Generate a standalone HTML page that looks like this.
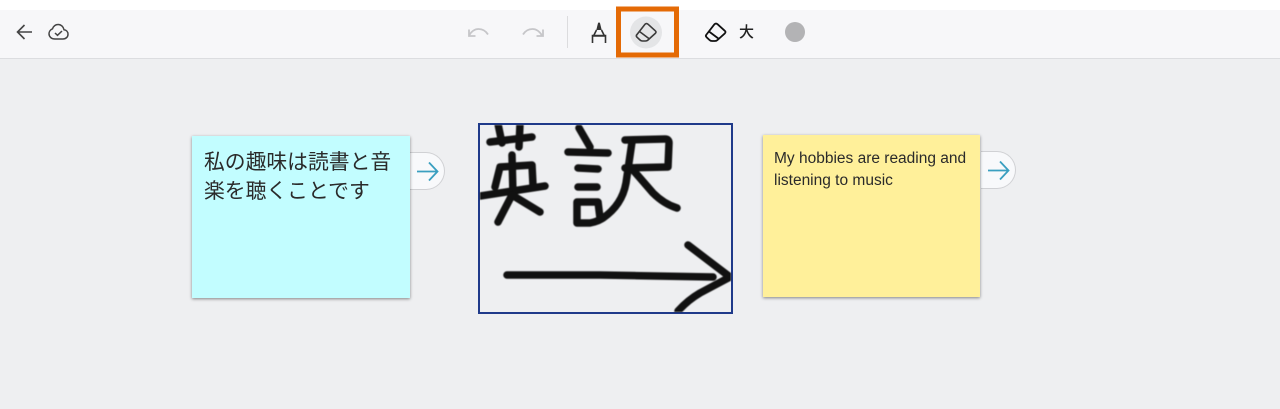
<!DOCTYPE html>
<html lang="ja">
<head>
<meta charset="utf-8">
<style>
html,body{margin:0;padding:0;width:1280px;height:409px;overflow:hidden;background:#eeeff1;font-family:"Liberation Sans","Noto Sans CJK JP",sans-serif;}
.abs{position:absolute;}
#top{left:0;top:0;width:1280px;height:10px;background:#fff;}
#bar{left:0;top:10px;width:1280px;height:48px;background:#f7f7f9;border-bottom:1px solid #dcdde0;}
.note{position:absolute;box-shadow:0 1px 3px rgba(0,0,0,.45);box-sizing:border-box;color:#222;}
.tab{position:absolute;width:35px;height:38px;background:#f8f9fb;border:1px solid #d0d1d4;border-left:none;border-radius:0 19px 19px 0;box-sizing:border-box;}
</style>
</head>
<body>
<div class="abs" id="top"></div>
<div class="abs" id="bar"></div>

<!-- toolbar icons -->
<svg class="abs" style="left:0;top:0" width="1280" height="60" viewBox="0 0 1280 60" fill="none">
  <!-- back -->
  <path d="M32 32H17.500M24.500 25l-7 7 7 7" stroke="#444" stroke-width="1.600"/>
  <!-- cloud check -->
  <path d="M55 39h8c3 0 5-2.200 5-4.800 0-2.500-1.800-4.200-4-4.500-.6-3-3-5.200-5.800-5.200-2.800 0-4.800 1.800-5.700 4.300-2 .8-3.500 2.800-3.500 5 0 3 2.500 5.200 6 5.200z" stroke="#444" stroke-width="1.500"/>
  <path d="M55 33l2.500 2.300 4.500-4.300" stroke="#444" stroke-width="1.500"/>
  <!-- undo -->
  <path d="M469 35.500c3-5 6.500-6.500 9.500-6.500 3.500 0 7 1.500 9.500 5.500" stroke="#c6c6c9" stroke-width="1.800"/>
  <path d="M469 29.500v6.500h6.500" stroke="#c6c6c9" stroke-width="1.800"/>
  <!-- redo -->
  <path d="M523 34.500c2.500-4 6-5.500 9.500-5.500 3 0 6.500 1.500 9.500 6.500" stroke="#c6c6c9" stroke-width="1.800"/>
  <path d="M543 29.500v6.500h-6.500" stroke="#c6c6c9" stroke-width="1.800"/>
  <!-- divider -->
  <path d="M567.500 16V48" stroke="#dcdcde" stroke-width="1"/>
  <!-- pen -->
  <path d="M596.300 30l1.600-6.500c.3-1.300 1.900-1.300 2.200 0l1.600 6.500z" fill="#333"/>
  <path d="M596.500 30l-3 6h11l-3-6M592.500 43v-7.500h13V43" stroke="#333" stroke-width="1.600"/>
  <!-- active circle -->
  <circle cx="646" cy="32.500" r="16" fill="#e4e5e7"/>
  <!-- eraser 1 -->
  <path d="M645 24.200Q646.500 23 648 24.200L655.300 30.800Q656.700 32 655.300 33.400L648 40Q647 41 645.500 41H642.500Q641 41 640 40L637 37.200Q635.700 35.800 637 34.500Z" stroke="#3a3a3a" stroke-width="1.600" stroke-linejoin="round"/>
  <path d="M639.500 31.500L649.500 39" stroke="#3a3a3a" stroke-width="1.600"/>
  <!-- eraser 2 -->
  <path d="M714.500 24.200Q716 23 717.500 24.200L724.800 30.800Q726.200 32 724.800 33.400L717.500 40Q716.500 41 715 41H712Q710.500 41 709.500 40L706.500 37.200Q705.200 35.800 706.500 34.500Z" stroke="#111" stroke-width="1.800" stroke-linejoin="round"/>
  <path d="M709 31.500L719 39" stroke="#111" stroke-width="1.800"/>
  <!-- color -->
  <circle cx="795" cy="32" r="10" fill="#b3b3b5"/>
  <!-- orange highlight -->
  <rect x="618.500" y="9" width="58" height="46" stroke="#e46a05" stroke-width="5"/>
</svg>
<div class="abs" style="left:739px;top:24px;font-size:15px;line-height:18px;color:#222;font-weight:500;font-family:'Liberation Sans','Noto Sans CJK JP',sans-serif;">大</div>

<!-- left tab + note -->
<div class="tab" style="left:410px;top:152px;"></div>
<svg class="abs" style="left:410px;top:152px" width="36" height="38" fill="none"><path d="M7 19.500H27M19 10.500l8.500 9-8.500 9" stroke="#3a9fc0" stroke-width="1.800"/></svg>
<div class="note" style="left:192px;top:136px;width:218px;height:162px;background:#c2fdff;padding:12px 12px;font-size:20.800px;line-height:29px;color:#2a2a2a;">私の趣味は読書と音楽を聴くことです</div>

<!-- drawing -->
<div class="abs" style="left:478px;top:123px;width:255px;height:191px;box-sizing:border-box;border:2px solid #1f3a8a;"></div>
<svg class="abs" style="left:480px;top:125px;filter:blur(.5px)" width="251" height="187" viewBox="480 125 251 187" fill="none" stroke="#111" stroke-width="7.500" stroke-linecap="round" stroke-linejoin="round">
  <!-- 英 -->
  <path d="M490 142L532 137"/>
  <path d="M498 124L502 143"/>
  <path d="M520 124L519 147"/>
  <path d="M495 187L500 167L532 165L533 185"/>
  <path d="M512 155L513 195"/>
  <path d="M480 196L545 186"/>
  <path d="M512 195L498 222"/>
  <path d="M512 195L540 212"/>
  <!-- 訳 -->
  <path d="M579 128L590 147"/>
  <path d="M568 152L608 153"/>
  <path d="M578 168L598 169"/>
  <path d="M578 187L597 187"/>
  <path d="M577 222L577 202L598 202L600 218"/>
  <path d="M577 223L590 223Q600 221 604 217"/>
  <path d="M625 140L665 139Q669 139 669 143L668 167L625 168"/>
  <path d="M632 142L626 183Q622 205 603 218"/>
  <path d="M633 170L653 193Q664 204 677 208"/>
  <!-- arrow -->
  <path d="M507 275L600 275L713 277"/>
  <path d="M688 245L730 277L700 293Q688 300 678 311"/>
</svg>

<!-- right tab + note -->
<div class="tab" style="left:981px;top:151px;"></div>
<svg class="abs" style="left:981px;top:151px" width="36" height="38" fill="none"><path d="M7 19.500H27M19 10.500l8.500 9-8.500 9" stroke="#3a9fc0" stroke-width="1.800"/></svg>
<div class="note" style="left:763px;top:135px;width:217px;height:162px;background:#fff09a;padding:13px 11px;font-size:15.500px;line-height:22px;color:#2a2a2a;">My hobbies are reading and listening to music</div>
</body>
</html>
